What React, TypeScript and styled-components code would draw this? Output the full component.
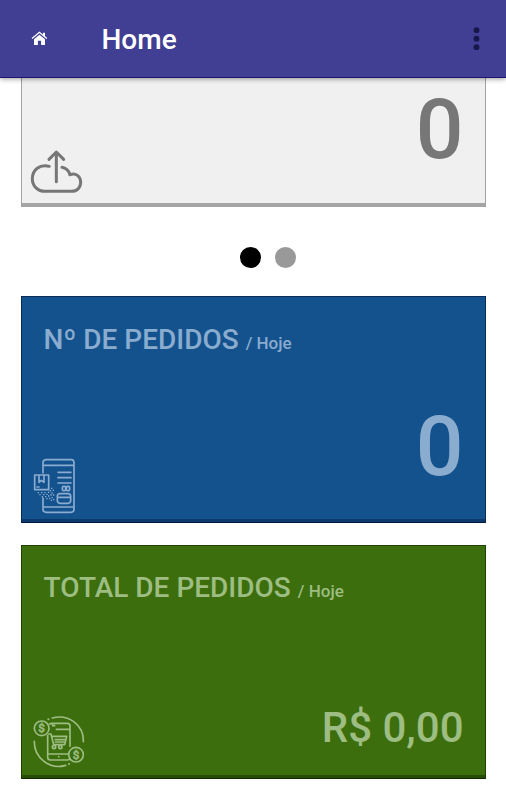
import React from "react";
import styled, { createGlobalStyle } from "styled-components";

const GlobalStyle = createGlobalStyle`
  * { box-sizing: border-box; }
  body { margin: 0; background: #fff; font-family: Roboto, sans-serif; font-weight: 500; overflow: hidden; }
  svg { display: block; }
`;

const Page = styled.div`
  width: 506px;
  height: 800px;
  overflow: hidden;
`;

const Toolbar = styled.header`
  position: relative;
  z-index: 1;
  display: flex;
  align-items: center;
  height: 78px;
  padding: 0 26px 0 31px;
  background: #403f94;
  border-bottom: 1px solid #1c1672;
  box-shadow: 0 1px 5px rgba(0, 0, 0, 0.4);
`;

const PageTitle = styled.h1`
  flex: 1;
  margin: 2px 0 0 53.5px;
  color: #fff;
  font-size: 28px;
  font-weight: 500;
  line-height: 36px;
`;

const MenuButton = styled.button`
  width: 7px;
  height: 24px;
  padding: 0;
  border: 0;
  background: none;
  color: #17174b;
`;

const Content = styled.main`
  display: flex;
  flex-direction: column;
  padding: 0 20px 0 21px;
`;

type Tone = "gray" | "blue" | "green";

const tones = {
  gray: { bg: "#f0f0f0", fg: "#777777", line: "#a2a2a2", base: "#a4a4a4", edge: "#a4a4a4" },
  blue: { bg: "#14528e", fg: "#8aaccf", line: "#0b2c58", base: "#0d3a6c", edge: "#04183d" },
  green: { bg: "#3c6e0d", fg: "#9dbd82", line: "#1d4204", base: "#274d09", edge: "#0c2900" },
};

const Card = styled.section<{ $tone: Tone; $height: number; $open?: boolean }>`
  display: flex;
  flex-direction: column;
  justify-content: space-between;
  height: ${(p) => p.$height}px;
  color: ${(p) => tones[p.$tone].fg};
  background: ${(p) => tones[p.$tone].bg};
  border: 1px solid ${(p) => tones[p.$tone].line};
  border-top-width: ${(p) => (p.$open ? 0 : 1)}px;
  border-bottom-color: ${(p) => tones[p.$tone].edge};
  box-shadow: inset 0 -3px ${(p) => tones[p.$tone].base};
`;

const CardTitle = styled.h2<{ $top: number }>`
  margin: ${(p) => p.$top}px 0 0 21.6px;
  font-size: 28px;
  font-weight: 500;
  line-height: 36px;
  white-space: nowrap;
`;

const Period = styled.small`
  margin-left: 7px;
  font-size: 17px;
`;

const CardBody = styled.div<{ $bottom: number; $left: number }>`
  display: flex;
  align-items: flex-end;
  justify-content: space-between;
  padding: 0 21.5px ${(p) => p.$bottom}px ${(p) => p.$left}px;
`;

const Value = styled.div<{ $size: number; $lift: number }>`
  font-size: ${(p) => p.$size}px;
  line-height: 1;
  margin-bottom: ${(p) => p.$lift}px;
`;

const Pager = styled.nav`
  display: flex;
  align-items: center;
  justify-content: center;
  gap: 14px;
  height: 89px;
  padding: 12px 0 0 28px;
`;

const Dot = styled.span<{ $active?: boolean }>`
  width: 21px;
  height: 21px;
  border-radius: 50%;
  background: ${(p) => (p.$active ? "#000" : "#999")};
`;

const Gap = styled.div`
  height: 22px;
`;

const HomeIcon = () => (
  <svg width="17" height="15" viewBox="0 0 17 15" fill="#fff">
    <path d="M3 8.3 8.4 3.7 14 8.3V14h-3.9V9.8H6.9V14H3Z" />
    <path d="M1 7.6 8.4 1.3 15.8 7.6" fill="none" stroke="#fff" strokeWidth="1.3" />
    <path d="M12 1.7h2v4l-2-1.7Z" />
  </svg>
);

const CloudIcon = () => (
  <svg width="53.33" height="45" viewBox="60 27 160 135" fill="none" stroke="currentColor" strokeWidth="9" strokeLinecap="round" strokeLinejoin="round">
    <path d="M118 79C89 71 67 90 67 116C67 139 84 154 105 154H185C201 154 212 143 212 127C212 109 197 97 180 104" />
    <path d="M156 82C168 84 176 92 180 104" />
    <path d="M139 125V36M117 58 139 36 161 58" />
  </svg>
);

const OrderIcon = () => (
  <svg width="44" height="57" viewBox="54 21 132 171" fill="none" stroke="currentColor" strokeWidth="5" strokeLinecap="round" strokeLinejoin="round">
    <path d="M84 69V38Q84 29 94 29H168Q177 29 177 38V178Q177 187 168 187H94Q84 187 84 178V144M84 46H177M84 171H177" />
    <path d="M59 75H101V119H59ZM72 75V97L79 91L87 97V75M66 111H72" />
    <path d="M129 67H168M129 83H168M129 99H168" />
    <rect x="142" y="109" width="10" height="13" rx="4" />
    <rect x="154" y="109" width="10" height="13" rx="4" />
    <path d="M127 139Q127 131 135 131H159Q167 131 167 139V151Q167 160 159 160H135Q127 160 127 151ZM128 142H166" />
    <path d="M68 128h4M78 128h4M88 128h4M73 134h4M84 134h4M94 133h4M80 140h4M90 140h4M99 127h4M108 115h4M113 121h4M104 122h4M109 129h4M99 138h4M106 135h4M114 135h4M94 146h4M102 145h4M110 143h4M107 151h4M114 149h4" strokeWidth="4" strokeLinecap="butt" />
  </svg>
);

const SalesIcon = () => (
  <svg width="54" height="53" viewBox="51 30 162 159" fill="none" stroke="currentColor" strokeWidth="5" strokeLinecap="round" strokeLinejoin="round">
    <path d="M112 39C162 26 207 62 205 110M58 109C57 157 103 196 152 181" />
    <path d="M100 43h.1M162 177h.1" strokeWidth="6" />
    <circle cx="80" cy="70" r="22" />
    <circle cx="183" cy="149" r="22" />
    <g fill="currentColor" stroke="currentColor" strokeWidth="1.5" fontFamily="Roboto, sans-serif" fontSize="35" fontWeight="500" textAnchor="middle">
      <text x="80" y="82">$</text>
      <text x="183" y="161">$</text>
    </g>
    <path d="M103 57Q105 55 111 55H157Q165 55 165 63V124M98 91V157Q98 165 106 165H157Q163 165 165 161M124 73H164M98 147H159M131 155h.1M113 57v5h6" />
    <path d="M101 87H108L116 119H149L155 94H111M121 104H151M121 111H147" />
    <circle cx="117" cy="126" r="5" />
    <circle cx="136" cy="126" r="5" />
  </svg>
);

export default function App() {
  return (
    <Page>
      <GlobalStyle />
      <Toolbar>
        <HomeIcon />
        <PageTitle>Home</PageTitle>
        <MenuButton aria-label="Menu">
          <svg width="7" height="24" viewBox="0 0 7 24" fill="currentColor">
            <circle cx="3.5" cy="3.2" r="2.9" />
            <circle cx="3.5" cy="11.7" r="2.9" />
            <circle cx="3.5" cy="20.2" r="2.9" />
          </svg>
        </MenuButton>
      </Toolbar>
      <Content>
        <Card $tone="gray" $height={129} $open>
          <span />
          <CardBody $bottom={12} $left={8}>
            <CloudIcon />
            <Value $size={84} $lift={22}>0</Value>
          </CardBody>
        </Card>
        <Pager>
          <Dot $active />
          <Dot />
        </Pager>
        <Card $tone="blue" $height={227}>
          <CardTitle $top={25}>Nº DE PEDIDOS<Period>/ Hoje</Period></CardTitle>
          <CardBody $bottom={8} $left={11}>
            <OrderIcon />
            <Value $size={84} $lift={25}>0</Value>
          </CardBody>
        </Card>
        <Gap />
        <Card $tone="green" $height={234}>
          <CardTitle $top={24}>TOTAL DE PEDIDOS<Period>/ Hoje</Period></CardTitle>
          <CardBody $bottom={10} $left={10}>
            <SalesIcon />
            <Value $size={42} $lift={19}>R$ 0,00</Value>
          </CardBody>
        </Card>
      </Content>
    </Page>
  );
}
